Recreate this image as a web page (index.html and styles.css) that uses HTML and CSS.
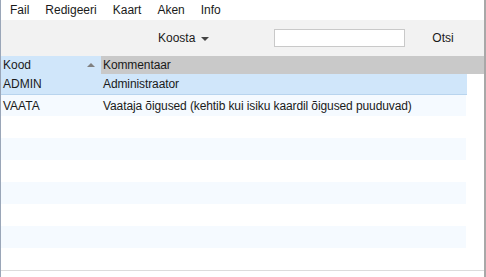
FILE: index.html
```html
<!DOCTYPE html>
<html lang="et">
<head>
    <meta charset="UTF-8">
    <title>Kasutajagrupid</title>
    <link rel="stylesheet" href="styles.css">
</head>
<body>
    <div class="window">
        <div class="menubar">
            <span class="menu-item">Fail</span>
            <span class="menu-item">Redigeeri</span>
            <span class="menu-item">Kaart</span>
            <span class="menu-item">Aken</span>
            <span class="menu-item">Info</span>
        </div>

        <div class="toolbar">
            <span class="koosta">Koosta <span class="caret"></span></span>
            <input class="search" type="text">
            <span class="otsi">Otsi</span>
        </div>

        <div class="table">
            <div class="head">
                <div class="col-kood">Kood <span class="sort"></span></div>
                <div class="col-komm">Kommentaar</div>
            </div>
            <div class="row selected">
                <div class="col-kood">ADMIN</div>
                <div class="col-komm">Administraator</div>
            </div>
            <div class="row alt first">
                <div class="col-kood">VAATA</div>
                <div class="col-komm">Vaataja õigused (kehtib kui isiku kaardil õigused puuduvad)</div>
            </div>
            <div class="row"></div>
            <div class="row alt"></div>
            <div class="row"></div>
            <div class="row alt"></div>
            <div class="row"></div>
            <div class="row alt"></div>
            <div class="row last"></div>
        </div>
    </div>
</body>
</html>
```

FILE: styles.css
```css
body {
    margin: 0;
    font-family: "Liberation Sans", Arial, sans-serif;
    font-size: 12px;
    color: #1a1a1a;
    background-color: #ffffff;
}

/* janela inteira */
.window {
    width: 486px;
    height: 277px;
    border-right: 2px solid #a8a8a8;
    border-left: 1px solid #9aa6b8;
    box-sizing: border-box;
    overflow: hidden;
}

.menubar {
    height: 20px;
    display: flex;
    align-items: center;
    padding-left: 8px;
    gap: 14px;
    background-color: #ffffff;
}

.menu-item {
    padding: 0 1px;
}

.toolbar {
    height: 36px;
    display: flex;
    align-items: center;
    padding-left: 157px;
    background-color: #f2f2f2;
}

.koosta {
    display: flex;
    align-items: center;
    gap: 6px;
}

.caret {
    width: 0;
    height: 0;
    border-left: 4px solid transparent;
    border-right: 4px solid transparent;
    border-top: 4px solid #444444;
    margin-top: 1px;
}

.search {
    width: 131px;
    height: 18px;
    margin: 0 0 0 65px;
    padding: 0;
    border: 1px solid #c9c9c9;
    background-color: #ffffff;
    box-sizing: border-box;
}

.otsi {
    margin-left: 27px;
}

/* tabela */
.table {
    display: flex;
    flex-direction: column;
}

.head {
    height: 18px;
    display: flex;
    background-color: #c9c9c9;
}

.head .col-kood {
    background-color: #d0e6fa;
    display: flex;
    justify-content: space-between;
    align-items: center;
    padding-right: 6px;
}

.sort {
    width: 0;
    height: 0;
    border-left: 4px solid transparent;
    border-right: 4px solid transparent;
    border-bottom: 4px solid #808080;
}

.row {
    width: 465px;
    height: 22px;
    flex-shrink: 0;
    display: flex;
    background-color: #ffffff;
}

.row.alt {
    background-color: #f5faff;
}

.row.first {
    height: 21px;
}

.row.selected {
    background-color: #d0e6fa;
    border-bottom: 1px solid #b8d4ee;
    height: 20px;
    width: 466px;
}

.row.last {
    border-bottom: 1px solid #dcdcdc;
    width: 484px;
}

.col-kood {
    width: 100px;
    padding-left: 2px;
    box-sizing: border-box;
    display: flex;
    align-items: center;
}

.col-komm {
    flex: 1;
    padding-left: 2px;
    display: flex;
    align-items: center;
    white-space: nowrap;
    letter-spacing: -0.1px;
}
```
